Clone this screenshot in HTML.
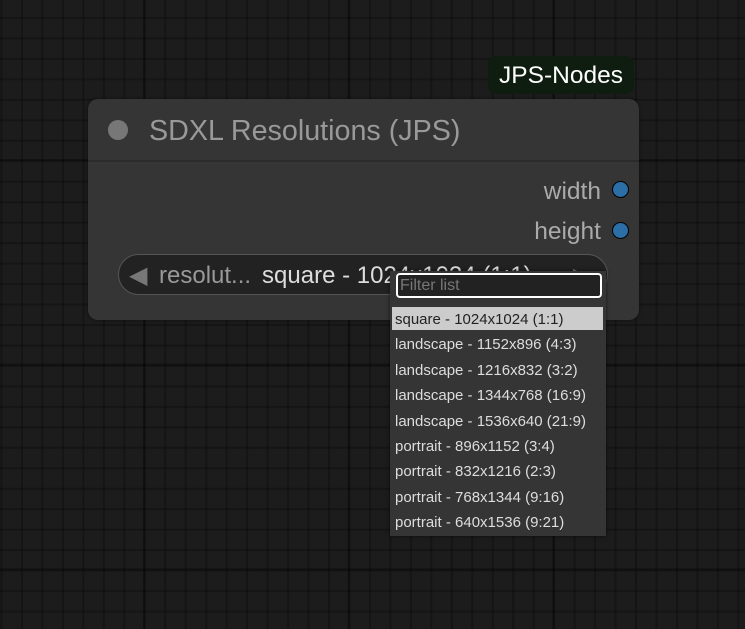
<!DOCTYPE html>
<html><head><style>
html,body{margin:0;padding:0;}
body{width:745px;height:629px;overflow:hidden;position:relative;font-family:"Liberation Sans",Arial,sans-serif;
background-color:#1c1c1c;
background-image:
linear-gradient(90deg,rgba(0,0,0,0.35) 2px,transparent 2px),
linear-gradient(0deg,rgba(0,0,0,0.35) 2px,transparent 2px),
linear-gradient(90deg,rgba(0,0,0,0.25) 2px,transparent 2px),
linear-gradient(0deg,rgba(0,0,0,0.25) 2px,transparent 2px);
background-size:204.7px 204.7px,204.7px 204.7px,20.47px 20.47px,20.47px 20.47px;
background-position:143px 0,0 161px,0.5px 0,0 -1.5px;}
.abs{position:absolute;}
</style></head><body>
<div class="abs" style="left:488px;top:56px;width:146px;height:38px;background:#0e1d0f;border-radius:8px;color:#fff;font-size:24.5px;line-height:40px;text-align:center;">JPS-Nodes</div>
<div class="abs" style="left:88px;top:99px;width:551px;height:221px;background:#353535;border-radius:10px;box-shadow:0 0 3px rgba(0,0,0,.5);"></div>
<div class="abs" style="left:88px;top:160px;width:551px;height:2px;background:#2b2b2b;"></div>
<div class="abs" style="left:108px;top:120px;width:20px;height:20px;border-radius:50%;background:#777;"></div>
<div class="abs" style="left:149px;top:114px;color:#999;font-size:28.7px;line-height:34px;">SDXL Resolutions (JPS)</div>
<div class="abs" style="left:460px;top:177px;width:141px;text-align:right;color:#aaa;font-size:24.5px;line-height:30px;">width</div>
<div class="abs" style="left:460px;top:217px;width:141px;text-align:right;color:#aaa;font-size:24.5px;line-height:30px;">height</div>
<div class="abs" style="left:612px;top:181px;width:15px;height:15px;border-radius:50%;background:#2c6ea6;border:1.5px solid #000;"></div>
<div class="abs" style="left:612px;top:222px;width:15px;height:15px;border-radius:50%;background:#2c6ea6;border:1.5px solid #000;"></div>
<div class="abs" style="left:118px;top:254px;width:488px;height:39px;border-radius:21px;background:#222;border:1.5px solid #555;"></div>
<div class="abs" style="left:129px;top:261px;color:#777;font-size:24px;line-height:30px;">◀</div>
<div class="abs" style="left:159px;top:261px;color:#999;font-size:24px;line-height:30px;white-space:nowrap;">resolut...<span style="color:#ddd;margin-left:11px">square - 1024x1024 (1:1)</span></div>
<div class="abs" style="left:573px;top:261px;color:#777;font-size:22px;line-height:30px;">▶</div>
<div class="abs" style="left:390px;top:271px;width:216px;height:265px;background:#353535;box-shadow:0 0 4px rgba(0,0,0,.6);"></div>
<div class="abs" style="left:396px;top:273px;width:200px;height:21px;border:2px solid #fff;border-radius:4px;background:#222;color:#777;font-size:16px;line-height:21px;padding-left:2px;">Filter list</div>
<div class="abs" style="left:392px;top:307px;width:211px;height:23px;background:#ccc;"></div>
<div class="abs" style="left:395px;top:307px;font-size:15px;line-height:25.4px;color:#ddd;white-space:nowrap;">
<div style="color:#222">square - 1024x1024 (1:1)</div>
<div>landscape - 1152x896 (4:3)</div>
<div>landscape - 1216x832 (3:2)</div>
<div>landscape - 1344x768 (16:9)</div>
<div>landscape - 1536x640 (21:9)</div>
<div>portrait - 896x1152 (3:4)</div>
<div>portrait - 832x1216 (2:3)</div>
<div>portrait - 768x1344 (9:16)</div>
<div>portrait - 640x1536 (9:21)</div>
</div>
</body></html>
